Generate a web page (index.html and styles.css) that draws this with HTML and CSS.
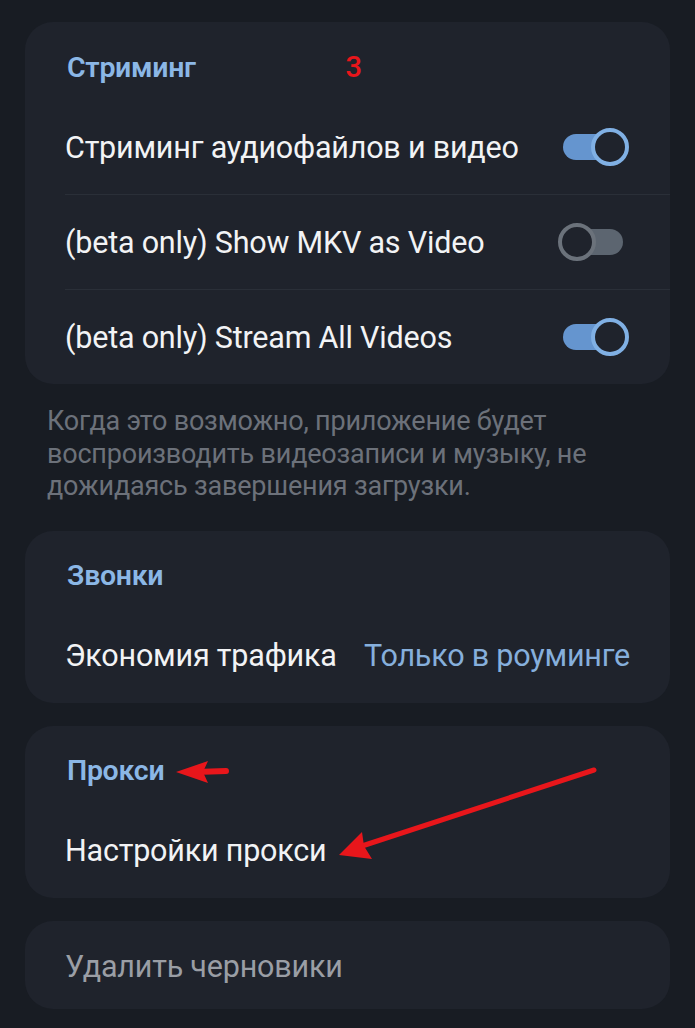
FILE: index.html
```html
<html>
<head>
    <link rel="stylesheet" href="styles.css">
</head>
<body>
  <div class="page">
    <div class="card">
      <div class="card-title">Стриминг <span class="mark">3</span></div>
      <div class="row">
        <span>Стриминг аудиофайлов и видео</span>
        <span class="toggle on"><span class="knob"></span></span>
      </div>
      <div class="row">
        <span>(beta only) Show MKV as Video</span>
        <span class="toggle"><span class="knob"></span></span>
      </div>
      <div class="row">
        <span>(beta only) Stream All Videos</span>
        <span class="toggle on"><span class="knob"></span></span>
      </div>
    </div>
    <p class="hint">Когда это возможно, приложение будет воспроизводить видеозаписи и музыку, не дожидаясь завершения загрузки.</p>

    <div class="card">
      <div class="card-title">Звонки</div>
      <div class="row plain">
        <span>Экономия трафика</span>
        <span class="value">Только в роуминге</span>
      </div>
    </div>

    <div class="card">
      <div class="card-title">Прокси</div>
      <div class="row plain">
        <span>Настройки прокси</span>
      </div>
    </div>

    <div class="card single">
      <div class="row plain dim">
        <span>Удалить черновики</span>
      </div>
    </div>
  </div>

  <!-- red annotation arrows drawn over the screenshot -->
  <svg class="arrows" width="695" height="1028" viewBox="0 0 695 1028">
    <line x1="226" y1="771" x2="196" y2="772" stroke="#e8161b" stroke-width="6" stroke-linecap="round"/>
    <polygon points="176,772 208,761 203,772 208,783" fill="#e8161b"/>
    <line x1="594" y1="770" x2="362" y2="846" stroke="#e8161b" stroke-width="5" stroke-linecap="round"/>
    <polygon points="339,855 362,832 364,846 372,859" fill="#e8161b"/>
  </svg>
</body>
</html>
```
FILE: styles.css
```css
html, body {
  height: 100%;
}
body {
  margin: 0;
  padding: 0;
  font-family: Roboto, "Noto Sans", sans-serif;
  background: #181c23;
  color: #f2f3f5;
  overflow: hidden;
}

.page {
  padding: 22px 25px 0;
  display: flex;
  flex-direction: column;
}

.card {
  background: #1f232c;
  border-radius: 28px;
  padding: 0 0 0 40px;
  margin-bottom: 23px;
}

.card-title {
  color: #8bb7e6;
  font-size: 28.5px;
  font-weight: 600;
  line-height: 34px;
  padding: 28px 0 0 2px;
  height: 50px;
  letter-spacing: -0.3px;
}

.card-title .mark {
  color: #e8161b;
  font-size: 29px;
  font-weight: 500;
  margin-left: 143px;
}

.row {
  display: flex;
  align-items: center;
  justify-content: space-between;
  height: 94px;
  font-size: 30.5px;
  letter-spacing: -0.2px;
  padding-right: 49px;
  border-top: 1px solid #2a2f38;
}

.card-title + .row {
  border-top: none;
}

.row.plain {
  border-top: none;
  padding-right: 40px;
}

.row .value {
  color: #86afdc;
}

.row.dim {
  color: #9a9ea5;
  height: 84px;
  padding-top: 4px;
}

.card.single {
  margin-bottom: 0;
}

.hint {
  margin: -2px 30px 28px 22px;
  color: #6c717a;
  font-size: 27px;
  line-height: 32.5px;
  letter-spacing: -0.2px;
}

.toggle {
  position: relative;
  width: 58px;
  height: 26px;
  border-radius: 13px;
  background: #6595cf;
}

.toggle .knob {
  position: absolute;
  top: -6px;
  right: -8px;
  width: 30px;
  height: 30px;
  border: 4px solid #80b0e4;
  border-radius: 50%;
  background: #1f232c;
}

.toggle:not(.on) {
  background: #5c6570;
  width: 57px;
  margin-right: -2px;
}

.toggle:not(.on) .knob {
  right: auto;
  left: -8px;
  border-color: #6b727b;
}

.arrows {
  position: absolute;
  top: 0;
  left: 0;
  pointer-events: none;
}
```
